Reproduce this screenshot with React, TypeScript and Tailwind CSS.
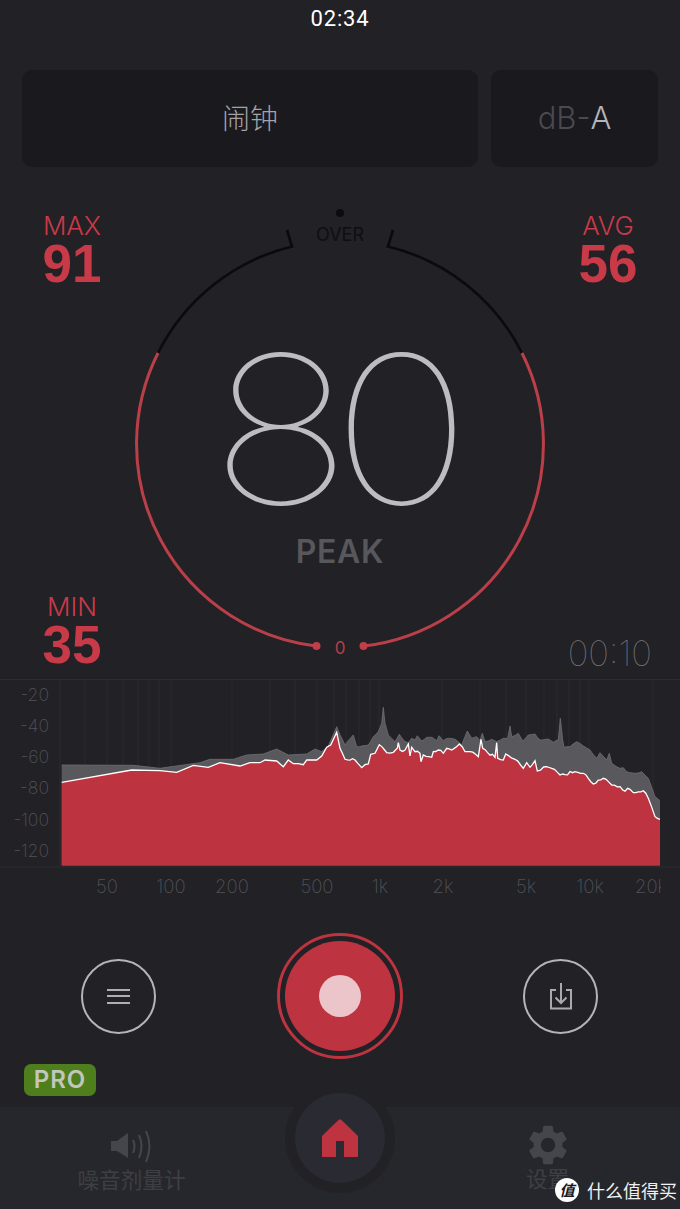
import React from 'react';
import { MdSettings } from 'react-icons/md';

const sans = 'font-["Inter","Noto_Sans_CJK_SC",sans-serif]';
const cjk = 'font-["Noto_Sans_CJK_SC",sans-serif]';

// spectrum points read from the reference, as [x, y] in page pixels
const z1 = (p: number[][]) => p.map(([x, y]) => [x / 3, 670 + y / 3]);
const z2 = (p: number[][]) => p.map(([x, y]) => [340 + x / 3, 670 + y / 3]);

// the upper band of the spectrum is jagged at a finer step than the points above
const roughen = (p: number[][], amount: number, seed: number) => {
  const out: number[][] = [];
  let s = seed;
  p.forEach(([x, y], i) => {
    out.push([x, y]);
    const next = p[i + 1];
    if (!next || x < 340 || next[0] - x < 4) return;
    const steps = Math.floor((next[0] - x) / 2.4);
    for (let k = 1; k < steps; k++) {
      s = (s * 137 + 71) % 211;
      const t = k / steps;
      out.push([x + (next[0] - x) * t, y + (next[1] - y) * t + (s / 211 - 0.5) * amount]);
    }
  });
  return out;
};

const level = roughen([
  ...z1([[185,337],[395,300],[480,302],[530,307],[580,286],[625,292],[660,278],[720,288],[750,278],[780,278],[795,270],[830,273],[850,290],[865,270],[880,281],[895,281],[910,284],[920,270],[950,270],[965,258],[980,232],[992,225],[1010,187]]),
  ...z2([[0,235],[15,268],[45,270],[65,293],[85,282],[92,253],[105,250],[118,224],[140,248],[160,247],[172,235],[175,218],[180,240],[195,240],[205,222],[210,258],[215,232],[225,245],[240,250],[243,275],[250,255],[275,262],[280,245],[295,240],[310,250],[320,235],[335,240],[358,222],[375,245],[390,245],[415,260],[423,208],[428,235],[465,262],[470,218],[473,265],[490,270],[497,252],[525,268],[550,295],[560,278],[570,292],[585,272],[592,303],[620,290],[635,295],[660,315],[705,305],[730,310],[760,342],[790,325],[815,345],[840,350],[848,360],[870,358],[880,368],[910,362],[925,385],[945,440],[960,448]]),
], 3, 17);

const peak = roughen([
  ...z1([[185,285],[400,286],[480,295],[600,278],[630,268],[700,268],[740,255],[790,252],[830,237],[865,255],[920,252],[945,237],[965,245],[985,228],[1010,170]]),
  ...z2([[0,195],[15,225],[25,212],[40,195],[50,230],[85,225],[100,200],[115,185],[125,160],[130,112],[135,160],[145,195],[165,215],[178,193],[190,210],[205,218],[215,205],[225,210],[232,197],[245,213],[260,202],[275,202],[290,212],[297,197],[310,212],[325,205],[345,208],[365,225],[382,183],[395,205],[410,200],[420,212],[427,190],[435,215],[455,208],[470,215],[490,205],[503,205],[510,168],[515,200],[535,190],[548,213],[565,195],[585,192],[600,210],[625,207],[640,217],[655,210],[661,145],[668,210],[672,232],[690,230],[710,215],[730,228],[750,240],[770,265],[780,248],[800,270],[808,250],[815,280],[840,295],[850,293],[860,305],[885,310],[905,305],[925,325],[945,380],[960,392]]),
], 1.2, 43);

const line = (p: number[][]) => p.map(([x, y]) => `${x.toFixed(1)},${y.toFixed(1)}`).join(' ');
const area = (p: number[][]) => `61.7,865.5 ${line(p)} 660,865.5`;

const gridX = [60, 85, 107, 123, 138, 149, 159, 171, 232, 270, 295, 317, 334, 346, 359, 370, 379, 442, 480, 506, 526, 544, 557, 569, 580, 589, 653];
const dbLabels: [string, number][] = [['-20', 694], ['-40', 725], ['-60', 756], ['-80', 787], ['-100', 819], ['-120', 850]];
const hzLabels: [string, number][] = [['50', 107], ['100', 171], ['200', 232], ['500', 317], ['1k', 380], ['2k', 443], ['5k', 526], ['10k', 590], ['20k', 651]];

const Stat = ({ label, value, className }: { label: string; value: number; className: string }) => (
  <div className={`col-start-1 row-start-1 w-[100px] text-center text-[#c93a49] ${className}`}>
    <div className={`${sans} text-[26px] leading-[30px] font-light`}>{label}</div>
    <div className="font-['Liberation_Sans',sans-serif] text-[53px] leading-[46px] font-bold">{value}</div>
  </div>
);

const Gauge = () => (
  <svg viewBox="130 205 420 460" className="col-start-1 row-start-1 mt-[38px] h-[460px] w-[420px] justify-self-center self-start">
    <circle cx="340" cy="213" r="4" fill="#0c0c0f" />
    <text x="340" y="241" textAnchor="middle" fontSize="18" fontFamily="Inter, sans-serif" fill="#0f0f12">OVER</text>
    <path d="M158 353 A203.5 203.5 0 0 1 292 246.5 L287 230" fill="none" stroke="#0b0b0e" strokeWidth="2.6" />
    <path d="M522 353 A203.5 203.5 0 0 0 388 246.5 L393 230" fill="none" stroke="#0b0b0e" strokeWidth="2.6" />
    <path d="M158 353 A203.5 203.5 0 0 0 316 646" fill="none" stroke="#bb3f49" strokeWidth="3" />
    <path d="M522 353 A203.5 203.5 0 0 1 364 646" fill="none" stroke="#bb3f49" strokeWidth="3" />
    <circle cx="316.5" cy="646" r="4" fill="#bf3f49" />
    <circle cx="363.5" cy="646" r="4" fill="#bf3f49" />
    <text x="340" y="654" textAnchor="middle" fontSize="17" fontFamily="Inter, sans-serif" fill="#b83c46">0</text>
  </svg>
);

const Spectrum = () => (
  <svg viewBox="0 679 680 226" className="block h-[226px] w-[680px]">
    <defs>
      <clipPath id="edge"><rect x="0" y="679" width="661" height="226" /></clipPath>
    </defs>
    <line x1="0" x2="680" y1="679.5" y2="679.5" stroke="#2c2c31" />
    <line x1="0" x2="680" y1="867" y2="867" stroke="#2c2c31" />
    {gridX.map((x) => (
      <line key={x} x1={x} x2={x} y1="680" y2="866" stroke="#2a2a2f" />
    ))}
    {dbLabels.map(([t, y]) => (
      <text key={t} x="49" y={y + 6.5} textAnchor="end" fontSize="17.5" fontWeight="200" fontFamily="Inter, sans-serif" fill="#525257">{t}</text>
    ))}
    <polygon points={area(peak)} fill="#58585d" />
    <polyline points={line(peak)} fill="none" stroke="#6f6f74" strokeWidth="0.8" />
    <polygon points={area(level)} fill="#bd3440" />
    <polyline points={line(level)} fill="none" stroke="#ffffff" strokeWidth="1.3" />
    <g clipPath="url(#edge)">
      {hzLabels.map(([t, x]) => (
        <text key={t} x={x} y="892.5" textAnchor="middle" fontSize="18.5" fontWeight="200" fontFamily="Inter, sans-serif" fill="#525257">{t}</text>
      ))}
    </g>
  </svg>
);

export default function App() {
  return (
    <div className={`relative flex h-[1209px] w-[680px] flex-col overflow-hidden bg-[#212126] ${sans}`}>
      {/* Status bar */}
      <div className="flex h-[36px] items-center justify-center pt-[1px] font-['Roboto',sans-serif] text-[22px] tracking-[0.04em] text-white">02:34</div>

      {/* Sound source + weighting */}
      <div className="mt-[34px] flex h-[97px] gap-[13px] pr-[22px] pl-[22px]">
        <div className={`flex w-[456px] items-center justify-center rounded-[10px] bg-[#19191e] pb-[4px] ${cjk} text-[28px] font-light text-[#a3a3a8]`}>闹钟</div>
        <div className="flex flex-1 items-center justify-center rounded-[10px] bg-[#19191e] text-[31px] font-light text-[#4a4a4f]">
          dB-<span className="text-[#b4b4b9]">A</span>
        </div>
      </div>

      {/* Gauge, with the readings over its corners */}
      <div className="grid h-[512px] grid-cols-1 grid-rows-1">
        <Gauge />
        <Stat label="MAX" value={91} className="mt-[44px] ml-[22px] justify-self-start self-start" />
        <Stat label="AVG" value={56} className="mt-[44px] mr-[22px] justify-self-end self-start" />
        <div className="col-start-1 row-start-1 mt-[177px] mr-[18px] scale-x-[1.15] justify-self-center self-start text-[206px] leading-[170px] font-thin tracking-[-0.085em] text-[#bcbcc1]">80</div>
        <div className="col-start-1 row-start-1 mt-[366px] justify-self-center self-start text-[32px] leading-[38px] font-semibold tracking-[0.02em] text-[#57575c]">PEAK</div>
        <Stat label="MIN" value={35} className="mb-[11px] ml-[22px] justify-self-start self-end" />
        <div className="col-start-1 row-start-1 mr-[28px] mb-[8px] justify-self-end self-end text-[35px] leading-[36px] font-thin text-[#77777c]">00:10</div>
      </div>

      <Spectrum />

      {/* Controls */}
      <div className="mt-[28px] flex h-[126px] items-center justify-between pr-[82px] pl-[81px]">
        <div className="flex size-[75px] items-center justify-center rounded-full border-2 border-[#b5b5b8]">
          <div className="flex w-[23px] flex-col gap-[4.5px]">
            <div className="h-[2px] bg-[#aeaeb3]" />
            <div className="h-[2px] bg-[#aeaeb3]" />
            <div className="h-[2px] bg-[#aeaeb3]" />
          </div>
        </div>
        <div className="flex size-[126px] items-center justify-center rounded-full border-[3px] border-[#bd3440]">
          <div className="flex size-[110px] items-center justify-center rounded-full bg-[#bd3440]">
            <div className="size-[42px] rounded-full bg-[#ecc5ca]" />
          </div>
        </div>
        <div className="flex size-[75px] items-center justify-center rounded-full border-2 border-[#b5b5b8]">
          <svg width="24" height="28" viewBox="0 0 24 28" fill="none" stroke="#a9a9ae" strokeWidth="2">
            <path d="M7 8H2V26.5H22V8H17" />
            <path d="M12 1V21M6.5 15.5L12 21L17.5 15.5" />
          </svg>
        </div>
      </div>

      {/* Upgrade badge */}
      <div className="mt-[5px] mb-[11px] ml-[24px] flex h-[32px] w-[72px] items-center justify-center rounded-[7px] bg-[#4e7f1c] text-[24px] font-semibold tracking-[0.04em] text-[#c2c6bc]">PRO</div>

      {/* Tab bar */}
      <div className="flex flex-1 bg-[#26272c]">
        <div className={`flex w-[266px] flex-col items-center pt-[23px] ${cjk} text-[21.6px] leading-[30px] text-[#3e3f44]`}>
          <svg width="43" height="33" viewBox="0 0 43 33" fill="none" className="h-[33px]">
            <path d="M0 11H6L17 3V28L6 21H0Z" fill="#45464b" stroke="none" />
            <path d="M22 10Q25 16 22 23" stroke="#45464b" strokeWidth="2" />
            <path d="M28 5Q33 16 28 28" stroke="#45464b" strokeWidth="2" />
            <path d="M35 1Q42 16 35 32" stroke="#45464b" strokeWidth="2" />
          </svg>
          <span className="mt-[1px] ml-[-2px]">噪音剂量计</span>
        </div>
        <div className={`ml-[150px] flex w-[266px] flex-col items-center pt-[14px] ${cjk} text-[21.6px] leading-[30px] text-[#3e3f44]`}>
          <MdSettings className="size-[48px] text-[#45464b]" />
          <span className="mt-[-6px]">设置</span>
        </div>
      </div>

      {/* Home button sits over the tab bar edge */}
      <div className="absolute top-[1083px] left-[285px] flex size-[110px] items-center justify-center rounded-full bg-[#212126]">
        <div className="flex size-[90px] items-center justify-center rounded-full bg-[#2a2b32]">
          <svg width="38" height="38" viewBox="0 0 38 38" fill="#bd3440">
            <path d="M19 0.5C20 0.5 20.5 1 21 1.5L37 17V37C37 37.6 36.6 38 36 38H23V22H15V38H2C1.4 38 1 37.6 1 37V17L17 1.5C17.5 1 18 0.5 19 0.5Z" />
          </svg>
        </div>
      </div>

      {/* Watermark */}
      <div className="absolute top-[1178px] left-[555px] flex h-[24px] items-center gap-[8px]">
        <div className={`flex size-[24px] items-center justify-center rounded-full bg-white ${cjk} text-[15px] font-bold text-[#1a1a1a] italic`}>值</div>
        <span className={`${cjk} text-[18px] leading-[24px] whitespace-nowrap text-[#f0f0f0]`}>什么值得买</span>
      </div>
    </div>
  );
}
